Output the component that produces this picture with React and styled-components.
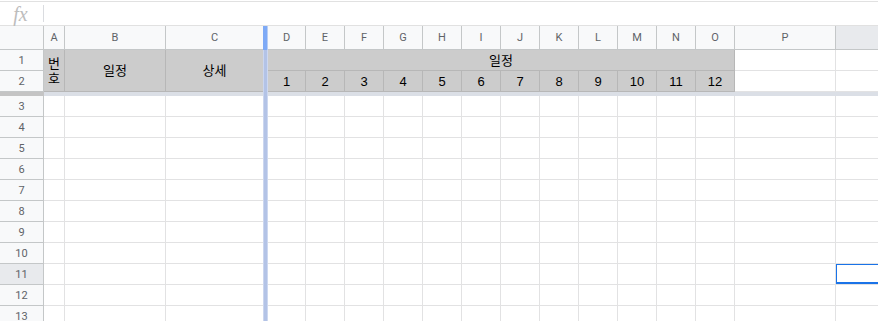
import styled, { createGlobalStyle } from "styled-components";

const GlobalStyle = createGlobalStyle`
  html, body {
    margin: 0;
    padding: 0;
    background: #fff;
    overflow: hidden;
  }
  body {
    font-family: "Liberation Sans", "Noto Sans CJK KR", Arial, sans-serif;
  }
`;

const LETTERS = "ABCDEFGHIJKLMNOPQ".split("");
const ROWS = Array.from({ length: 14 }, (_, i) => i + 1);
const MONTHS = Array.from({ length: 12 }, (_, i) => i + 1);
const SELECTED_ROW = 11;
const SELECTED_COL = "Q";

// grid columns: 1 row header, 2-4 A..C, 5 freeze divider, 6-19 D..Q
const colLine = (i) => (i < 3 ? i + 2 : i + 3);
// grid rows: 1 column header, 2-3 rows 1-2, 4 freeze band, 5.. rows 3+
const rowLine = (n) => (n <= 2 ? n + 1 : n + 2);

const Page = styled.div`
  width: 878px;
  height: 321px;
  overflow: hidden;
  padding-top: 1px;
  box-sizing: border-box;
`;

const FormulaBar = styled.div`
  display: flex;
  align-items: center;
  height: 25px;
  box-sizing: border-box;
  border-top: 1px solid #e1e1e1;
  border-bottom: 1px solid #e1e1e1;
`;

const FxLabel = styled.span`
  width: 43px;
  text-align: center;
  font-family: "Liberation Serif", "DejaVu Serif", serif;
  font-style: italic;
  font-size: 20px;
  line-height: 20px;
  color: #bdbdbd;
  padding-right: 2px;
  box-sizing: border-box;
`;

const FxSep = styled.span`
  width: 1px;
  height: 17px;
  background: #dadce0;
`;

const Grid = styled.div`
  display: grid;
  width: 940px;
  grid-template-columns: 44px 21px 101px 97px 5px 38px repeat(11, 39px) 101px 101px;
  grid-template-rows: 24px 21px 21px 4px repeat(12, 21px);
`;

const Box = styled.div`
  grid-column: ${(p) => p.$col};
  grid-row: ${(p) => p.$row};
  box-sizing: border-box;
  display: flex;
  align-items: center;
  justify-content: center;
  overflow: hidden;
  position: relative;
`;

const ColHeader = styled(Box)`
  background: ${(p) => (p.$active ? "#e8eaed" : "#f8f9fa")};
  border-right: ${(p) => (p.$edge ? "none" : "1px solid #c4c7c8")};
  border-bottom: 1px solid #c4c7c8;
  color: #5f6368;
  font-family: Roboto, "Liberation Sans", sans-serif;
  font-size: 11px;
`;

const RowHeader = styled(Box)`
  background: ${(p) => (p.$active ? "#e8eaed" : "#f8f9fa")};
  border-right: 1px solid #c4c7c8;
  border-bottom: 1px solid #c4c7c8;
  color: #5f6368;
  font-family: Roboto, "Liberation Sans", sans-serif;
  font-size: 11px;
`;

const Cell = styled(Box)`
  background: ${(p) => (p.$fill ? "#cccccc" : "#fff")};
  border-right: ${(p) =>
    p.$edge ? "none" : `1px solid ${p.$fill ? "#b7b7b7" : "#e2e2e3"}`};
  border-bottom: 1px solid ${(p) => (p.$fill ? "#b7b7b7" : "#e2e2e3")};
  color: #000;
  font-size: 13px;
  line-height: 15px;
  text-align: center;
  word-break: break-all;
`;

const Band = styled(Box)`
  background: ${(p) => (p.$head ? "#c4c4c4" : "#dbdfe6")};
`;

const Divider = styled(Box)`
  background: ${(p) =>
    p.$head
      ? "linear-gradient(to right, #7eaaf6 0 4px, #b7cdf4 4px)"
      : "linear-gradient(to right, #cbd6ef 0 1px, #b3c3e6 1px 4px, #cdd8f0 4px)"};
`;

const SelectionBox = styled.div`
  position: absolute;
  top: -1px;
  left: -1px;
  right: -1px;
  bottom: 0;
  border: 2px solid #1a73e8;
`;

function HeaderRow() {
  return (
    <>
      <RowHeader $col={1} $row={1} />
      {LETTERS.map((l, i) => (
        <ColHeader
          key={l}
          $col={colLine(i)}
          $row={1}
          $edge={l === "C"}
          $active={l === SELECTED_COL}
        >
          {l}
        </ColHeader>
      ))}
      <Divider $head $col={5} $row={1} />
    </>
  );
}

function FrozenBlock() {
  return (
    <>
      <Cell $fill $col={2} $row="2 / 4">번호</Cell>
      <Cell $fill $col={3} $row="2 / 4">일정</Cell>
      <Cell $fill $edge $col={4} $row="2 / 4">상세</Cell>
      <Cell $fill $col="6 / 18" $row={2}>일정</Cell>
      {MONTHS.map((m) => (
        <Cell $fill key={m} $col={m + 5} $row={3}>
          {m}
        </Cell>
      ))}
      {[1, 2].map((n) =>
        ["P", "Q"].map((l) => (
          <Cell key={l + n} $col={colLine(LETTERS.indexOf(l))} $row={rowLine(n)} />
        ))
      )}
    </>
  );
}

function BodyRows() {
  return ROWS.filter((n) => n >= 3).map((n) =>
    LETTERS.map((l, i) => (
      <Cell key={l + n} $col={colLine(i)} $row={rowLine(n)} $edge={l === "C"}>
        {n === SELECTED_ROW && l === SELECTED_COL && <SelectionBox />}
      </Cell>
    ))
  );
}

export default function App() {
  return (
    <Page>
      <GlobalStyle />
      <FormulaBar>
        <FxLabel>fx</FxLabel>
        <FxSep />
      </FormulaBar>
      <Grid>
        <HeaderRow />
        {ROWS.map((n) => (
          <RowHeader key={n} $col={1} $row={rowLine(n)} $active={n === SELECTED_ROW}>
            {n}
          </RowHeader>
        ))}
        <FrozenBlock />
        <Band $head $col={1} $row={4} />
        <Band $col="2 / 5" $row={4} />
        <Band $col="6 / -1" $row={4} />
        <Divider $col={5} $row="2 / -1" />
        <BodyRows />
      </Grid>
    </Page>
  );
}
